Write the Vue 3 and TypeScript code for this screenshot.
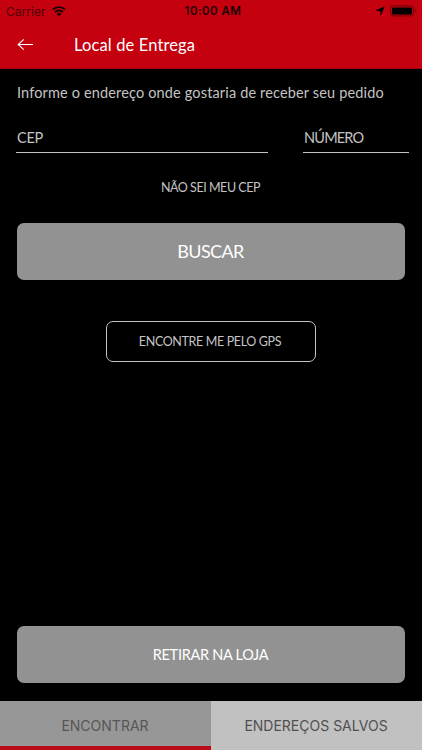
<template>
    <div class="screen">
        <header class="top">
            <div class="status">
                <div class="network">
                    <span class="carrier">Carrier</span>
                    <svg class="wifi" viewBox="0 0 14 11" width="14" height="11">
                        <path d="M.8 3.7a8.9 8.9 0 0 1 12.4 0M3 6.1a5.8 5.8 0 0 1 8 0" />
                        <path class="solid" d="M4.7 7.9a3.4 3.4 0 0 1 4.6 0L7 10.3z" />
                    </svg>
                </div>
                <span class="clock">10:00 AM</span>
                <div class="power">
                    <svg class="location" viewBox="0 0 10 10" width="10" height="10">
                        <path d="M9.8.2 5.8 9.8 5.1 5.2.3 4.6z" />
                    </svg>
                    <svg class="battery" viewBox="0 0 27 12" width="27" height="12">
                        <rect class="case" x=".5" y=".9" width="23" height="10" rx="2" />
                        <rect x="2" y="2.4" width="20" height="7" rx=".6" />
                        <path class="cap" d="M24.8 4.2q1.5.6 1.5 1.8t-1.5 1.8z" />
                    </svg>
                </div>
            </div>
            <div class="nav">
                <button class="back" aria-label="Voltar">
                    <svg viewBox="0 0 17 14" width="17" height="14">
                        <path d="M16 6.5H1.2M6.8 1.3 1.2 6.5l5.6 5.2" />
                    </svg>
                </button>
                <h1>Local de Entrega</h1>
            </div>
        </header>

        <main>
            <p class="intro">Informe o endereço onde gostaria de receber seu pedido</p>
            <div class="fields">
                <label v-for="field in fields" :key="field.name" :class="['field', field.name]">
                    <span>{{ field.label }}</span>
                </label>
            </div>
            <a class="unknown">NÃO SEI MEU CEP</a>
            <button class="fill search">BUSCAR</button>
            <button class="gps">ENCONTRE ME PELO GPS</button>
            <button class="fill pickup">RETIRAR NA LOJA</button>
        </main>

        <nav class="tabs">
            <button
                v-for="(tab, i) in tabs"
                :key="tab"
                :class="{ active: current === i }"
                @click="current = i"
            ><span>{{ tab }}</span></button>
        </nav>
    </div>
</template>

<script setup lang="ts">
import { ref } from 'vue';

interface Field {
    name:  string;
    label: string;
}

const fields: Field[] = [
    { name: 'cep',    label: 'CEP' },
    { name: 'number', label: 'NÚMERO' },
];

const tabs: string[] = ['ENCONTRAR', 'ENDEREÇOS SALVOS'];
const current = ref(0);
</script>

<style>
body { background: #000; }
</style>

<style scoped>
.screen {
    display: flex;
    flex-direction: column;
    height: 750px;
    background: #000;
    color: #c4c4c4;
    font-family: Lato, sans-serif;
    overflow: hidden;
    white-space: nowrap;
}

button {
    margin: 0;
    padding: 0;
    border: 0;
    background: none;
    color: inherit;
    font: inherit;
    letter-spacing: inherit;
}
svg { display: block; }

.top {
    height: 69px;
    box-sizing: border-box;
    background: #c5000f;
    border-bottom: 1px solid #a9000d;
}

.status {
    display: grid;
    grid-template-columns: 1fr auto 1fr;
    align-items: center;
    height: 22px;
    padding: 0 5px 0 6px;
    color: #1c0002;
    font-family: Inter, sans-serif;
    font-size: 12px;
}
.network { display: flex; align-items: center; gap: 6px; }
.carrier { color: #4b0006; letter-spacing: 0.05px; }
.wifi path { fill: none; stroke: #1c0002; stroke-width: 1.8; }
.wifi .solid { fill: #1c0002; stroke: none; }
.clock { font-weight: 600; font-size: 11.5px; letter-spacing: 0.45px; padding-left: 3px; }
.power { display: flex; justify-content: flex-end; align-items: center; gap: 5px; }
.battery .case { fill: none; stroke: #6f0008; }
.battery .cap { fill: #6f0008; }

.nav { display: flex; align-items: center; height: 45px; padding-left: 17px; color: #fff; }
.back { width: 57px; }
.back path { fill: none; stroke: #fff; stroke-width: 1.1; }
h1 { margin: 0; font-size: 16.5px; font-weight: 400; letter-spacing: 0.13px; }

main {
    display: flex;
    flex-direction: column;
    flex: 1;
    padding: 15px 17px 18.5px;
}
.intro { margin: 0; font-size: 14.5px; line-height: 18px; letter-spacing: 0.15px; }

.fields { display: flex; justify-content: space-between; margin: 19px -4px 0 -1px; }
.field {
    height: 32px;
    box-sizing: border-box;
    border-bottom: 1px solid #c4c4c4;
    padding-left: 1px;
    font-size: 14.5px;
    line-height: 34px;
}
.cep { width: 252px; letter-spacing: -0.3px; }
.number { width: 106px; letter-spacing: -0.8px; }

.unknown {
    align-self: center;
    margin-top: 26px;
    padding-right: 1px;
    font-size: 12.5px;
    line-height: 18px;
    letter-spacing: -0.45px;
}

.fill {
    height: 57px;
    border-radius: 7px;
    background: #929292;
    color: #fff;
}
.search { margin-top: 26px; padding: 0 1px 2px 0; font-size: 18px; letter-spacing: -0.6px; }
.gps {
    align-self: center;
    width: 210px;
    height: 41px;
    margin-top: 41px;
    padding-right: 2px;
    border: 1px solid #c4c4c4;
    border-radius: 7px;
    font-size: 12.5px;
    letter-spacing: -0.36px;
}
.pickup { margin-top: auto; padding-right: 1px; font-size: 14.5px; letter-spacing: -0.28px; }

.tabs { display: flex; height: 49px; }
.tabs button {
    flex: 1;
    box-sizing: border-box;
    padding: 4px 1px 0 0;
    border-bottom: 4px solid #c1c1c1;
    background: #c1c1c1;
    color: #505050;
    font-family: Inter, sans-serif;
    font-size: 14px;
}
.tabs .active { border-bottom-color: #b90c18; background: #979797; color: #565656; }
</style>
